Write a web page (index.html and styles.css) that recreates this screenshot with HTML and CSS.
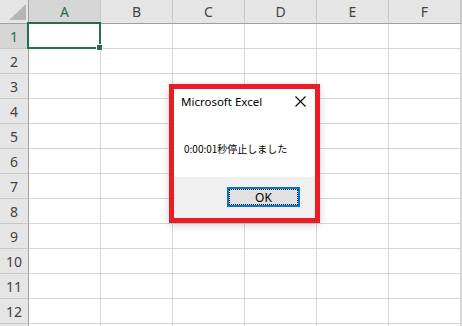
FILE: index.html
```html
<!DOCTYPE html>
<html>
<head>
    <title>Microsoft Excel</title>
    <link rel="stylesheet" href="styles.css">
</head>
<body>
    <div class="sheet" id="sheet">
        <div class="corner"></div>
    </div>

    <div class="dialog">
        <div class="title-bar">
            <span class="title">Microsoft Excel</span>
            <svg class="close" width="11" height="11" viewBox="0 0 11 11">
                <path d="M0.5 0.5 L10.5 10.5 M10.5 0.5 L0.5 10.5" stroke="#000" stroke-width="1.1" fill="none"/>
            </svg>
        </div>
        <div class="message">0:00:01秒停止しました</div>
        <div class="footer">
            <button class="ok-btn">OK</button>
        </div>
    </div>

    <script>
        const sheet = document.getElementById('sheet');
        const columns = ['A', 'B', 'C', 'D', 'E', 'F', ''];

        columns.forEach(name => {
            const head = document.createElement('div');
            head.className = 'col-head' + (name === 'A' ? ' selected' : '');
            head.textContent = name;
            sheet.appendChild(head);
        });

        // row 13 only peeks in at the bottom edge, so it gets no number
        for (let row = 1; row <= 13; row++) {
            const head = document.createElement('div');
            head.className = 'row-head' + (row === 1 ? ' selected' : '');
            head.textContent = row < 13 ? row : '';
            sheet.appendChild(head);
            columns.forEach((name, i) => {
                const cell = document.createElement('div');
                cell.className = 'cell';
                if (row === 1 && i === 0) {
                    cell.classList.add('active');
                    const handle = document.createElement('span');
                    handle.className = 'fill-handle';
                    cell.appendChild(handle);
                }
                sheet.appendChild(cell);
            });
        }
    </script>
</body>
</html>
```

FILE: styles.css
```css
body {
    margin: 0;
    background: #fff;
    overflow: hidden;
    font-family: "Noto Sans", "Liberation Sans", sans-serif;
}
.sheet {
    display: grid;
    grid-template-columns: 29px repeat(6, 72px) 1px;
    grid-template-rows: 24px;
    grid-auto-rows: 25px;
    height: 326px;
    overflow: hidden;
}
.sheet div {
    box-sizing: border-box;
}
.corner {
    position: relative;
    background: #e6e6e6;
    border-right: 1px solid #a0a0a0;
    border-bottom: 1px solid #a0a0a0;
}
.corner::after {
    content: "";
    position: absolute;
    left: 9px;
    top: 4px;
    width: 17px;
    height: 16px;
    background: #b6b6b6;
    clip-path: polygon(100% 0, 100% 100%, 0 100%);
}
.col-head,
.row-head {
    display: flex;
    align-items: center;
    justify-content: center;
    background: #e6e6e6;
    color: #444;
    font-size: 14px;
}
.col-head {
    border-right: 1px solid #c8c8c8;
    border-bottom: 1px solid #a0a0a0;
    padding-bottom: 1px;
}
.row-head {
    border-right: 1px solid #a0a0a0;
    border-bottom: 1px solid #c8c8c8;
}
.col-head.selected,
.row-head.selected {
    background: #d6d6d6;
    color: #217346;
}
.cell {
    border-right: 1px solid #d6d6d6;
    border-bottom: 1px solid #d6d6d6;
}
.cell.active {
    position: relative;
}
.cell.active::after {
    content: "";
    position: absolute;
    left: -2px;
    top: -2px;
    right: -1px;
    bottom: -1px;
    border: 2px solid #217346;
    z-index: 1;
}
.fill-handle {
    position: absolute;
    right: -3px;
    bottom: -3px;
    width: 5px;
    height: 5px;
    background: #217346;
    border: 1px solid #fff;
    z-index: 2;
}

.dialog {
    position: absolute;
    left: 169px;
    top: 84px;
    width: 151px;
    height: 139px;
    box-sizing: border-box;
    border: 5px solid #ec1c24;
    background: #fff;
    display: flex;
    flex-direction: column;
    box-shadow: 0 2px 8px rgba(0, 0, 0, 0.18);
}
.title-bar {
    height: 24px;
    display: flex;
    align-items: center;
    justify-content: space-between;
    padding: 0 9px 0 7px;
}
.title {
    font-size: 11.5px;
    color: #000;
}
.message {
    flex: 1;
    display: flex;
    align-items: center;
    padding: 6px 0 0 10px;
    font-family: "Noto Sans CJK JP", sans-serif;
    font-size: 10px;
    color: #000;
}
.footer {
    height: 41px;
    box-sizing: border-box;
    background: #f0f0f0;
    display: flex;
    justify-content: flex-end;
    align-items: flex-start;
    padding: 10px 15px 0 0;
}
.ok-btn {
    width: 73px;
    height: 20px;
    padding: 0;
    border: 2px solid #0078d7;
    background: #e1e1e1;
    outline: 1px dotted #000;
    outline-offset: -3px;
    font-family: "Noto Sans", "Liberation Sans", sans-serif;
    font-size: 12px;
    color: #000;
}
```
